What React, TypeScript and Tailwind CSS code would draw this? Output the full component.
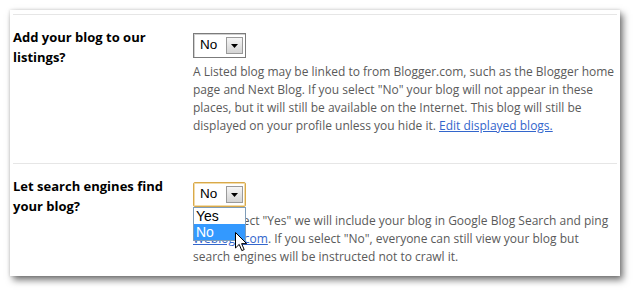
import React from "react";

const font = { fontFamily: "'Open Sans', sans-serif" };
const sysFont = { fontFamily: "'Liberation Sans', Arial, sans-serif" };

function Arrow() {
  return (
    <div className="ml-auto mr-[2px] flex h-[17px] w-[17px] items-center justify-center border border-[#9a9a9a] bg-gradient-to-b from-[#f6f6f6] to-[#d4d4d4]">
      <svg width="7" height="4" viewBox="0 0 7 4">
        <path d="M0 0H7L3.5 4Z" fill="#000" />
      </svg>
    </div>
  );
}

function Select({ focused }: { focused?: boolean }) {
  return (
    <div
      className={
        "flex h-[25px] w-[53px] items-center border pl-[6px] text-[13.5px] text-black " +
        (focused
          ? "rounded-[2px] border-[#d9a94a] shadow-[inset_0_0_0_1px_#f2dcaa]"
          : "border-[#7b7b7b] shadow-[inset_1px_1px_0_#d0d0d0]")
      }
      style={sysFont}
    >
      <span>No</span>
      <Arrow />
    </div>
  );
}

function Cursor() {
  return (
    <svg width="13" height="20" viewBox="0 0 13 20" className="absolute left-[41px] top-[24px]">
      <path
        d="M0.5 0.5 L0.5 16 L4.2 12.4 L6.8 18.6 L9.2 17.6 L6.6 11.6 L11.6 11.6 Z"
        fill="#fff"
        stroke="#000"
        strokeWidth="1"
        strokeLinejoin="round"
      />
    </svg>
  );
}

export default function App() {
  return (
    <div className="h-[294px] w-[639px] overflow-hidden bg-white pl-[10px] pt-[10px]">
      <div
        className="h-[266px] w-[610px] bg-white shadow-[3px_4px_7px_rgba(0,0,0,0.55),0_0_3px_rgba(0,0,0,0.15)]"
        style={font}
      >
        <div className="mx-[3px] pt-[4px]">
          <div className="h-px bg-[#e6e6e6]" />
          <div className="flex pt-[12px]">
            <div className="w-[181px]">
              <p className="w-[160px] text-[13px] font-bold leading-[20px] text-black">
                Add your blog to our listings?
              </p>
            </div>
            <div className="pt-[6px]">
              <Select />
              <p className="mt-[5px] w-[424px] text-[12px] leading-[18px] text-[#5a5a5a]">
                A Listed blog may be linked to from Blogger.com, such as the Blogger home page and Next
                Blog. If you select "No" your blog will not appear in these places, but it will still be
                available on the Internet. This blog will still be displayed on your profile unless you
                hide it. <a className="text-[#3366cc] underline">Edit displayed blogs.</a>
              </p>
            </div>
          </div>
          <div className="mt-[28px] h-px bg-[#e6e6e6]" />
          <div className="flex pt-[12px]">
            <div className="w-[181px]">
              <p className="w-[160px] text-[13px] font-bold leading-[20px] text-black">
                Let search engines find your blog?
              </p>
            </div>
            <div className="relative pt-[6px]">
              <Select focused />
              <p className="mt-[5px] w-[424px] text-[12px] leading-[18px] text-[#5a5a5a]">
                If you select "Yes" we will include your blog in Google Blog Search and ping{" "}
                <a className="text-[#3366cc] underline">Weblogs.com</a>. If you select "No", everyone
                can still view your blog but search engines will be instructed not to crawl it.
              </p>
              <div
                className="absolute left-0 top-[31px] w-[53px] border border-[#7f9db9] bg-white text-[14px] leading-[16px]"
                style={sysFont}
              >
                <div className="pl-[2px] text-black">Yes</div>
                <div className="bg-[#3399ff] pl-[2px] text-white">No</div>
                <Cursor />
              </div>
            </div>
          </div>
        </div>
      </div>
    </div>
  );
}
